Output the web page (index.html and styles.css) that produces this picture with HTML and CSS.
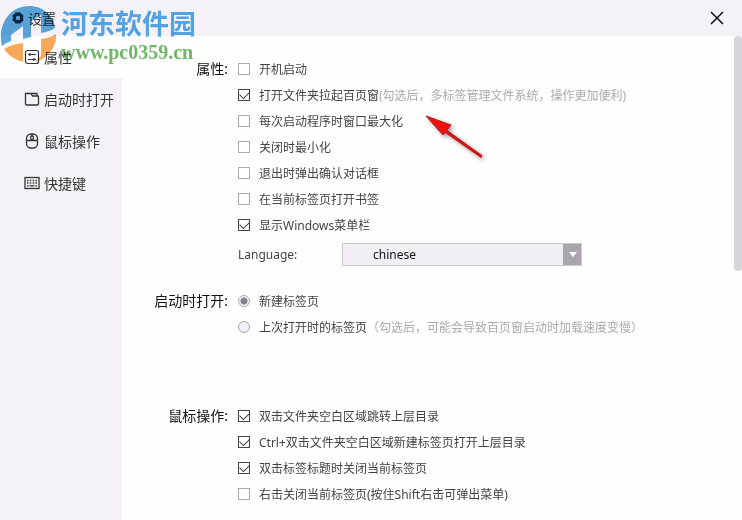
FILE: index.html
```
<!DOCTYPE html>
<html lang="zh-CN">

<head>
    <meta charset="UTF-8">
    <meta name="viewport" content="width=device-width, initial-scale=1.0">
    <title>设置</title>
    <link rel="stylesheet" href="styles.css">
</head>

<body>
    <header class="titlebar">
        <svg class="gear" viewBox="0 0 12 12">
            <path fill="#24384c" fill-rule="evenodd" d="M3.5 0.5h5L9.5 2l2 1.5-.5 2.5.5 2.5-2 1.5-1 1.5h-5L2.500 10 .5 8.500 1 6 .5 3.500 2.500 2zM6 3.800a2.200 2.200 0 1 0 0 4.400 2.200 2.200 0 0 0 0-4.400z"/>
        </svg>
        <h1>设置</h1>
        <button class="close" aria-label="关闭">
            <svg viewBox="0 0 14 14"><path d="M1 1l12 12M13 1L1 13" fill="none" stroke="#111" stroke-width="1.500"/></svg>
        </button>
    </header>

    <div class="layout">
        <nav class="sidebar">
            <a href="#general" class="active">
                <svg viewBox="0 0 16 16" fill="none" stroke="#333" stroke-width="1.200">
                    <rect x="1.500" y="1.500" width="13" height="13" rx="2"/>
                    <path d="M4 5.500h8M6 4v3M4 10.500h8M10 9v3"/>
                </svg>
                属性
            </a>
            <a href="#startup">
                <svg viewBox="0 0 16 16" fill="none" stroke="#333" stroke-width="1.300">
                    <path d="M2.500 14q-1 0-1-1V2.500h5.500l1.500 2.500H14q.5 0 .5.500V13q0 1-1 1zM7 2.500h6V5"/>
                </svg>
                启动时打开
            </a>
            <a href="#mouse">
                <svg viewBox="0 0 16 16" fill="none" stroke="#333" stroke-width="1.300">
                    <rect x="2.500" y="1" width="11" height="14" rx="4.500"/>
                    <path d="M2.500 7.500h11M8 1v2M8 6v1.500"/>
                    <rect x="6.600" y="3" width="2.800" height="3.400" rx="1"/>
                </svg>
                鼠标操作
            </a>
            <a href="#hotkey">
                <svg viewBox="0 0 16 16" fill="none" stroke="#333" stroke-width="1.300">
                    <rect x="1" y="2.500" width="14" height="11"/>
                    <path d="M3 5.500h10M3 8h10" stroke-dasharray="1.500 1.300"/>
                    <path d="M3 10.800h1.500M5.500 10.800h5M11.500 10.800H13"/>
                </svg>
                快捷键
            </a>
        </nav>

        <main class="content">
            <section class="group" id="general">
                <h2>属性:</h2>
                <div class="options">
                    <label><input type="checkbox"><span>开机启动</span></label>
                    <label><input type="checkbox" checked><span>打开文件夹拉起百页窗<em>(勾选后，多标签管理文件系统，操作更加便利)</em></span></label>
                    <label><input type="checkbox"><span>每次启动程序时窗口最大化</span></label>
                    <label><input type="checkbox"><span>关闭时最小化</span></label>
                    <label><input type="checkbox"><span>退出时弹出确认对话框</span></label>
                    <label><input type="checkbox"><span>在当前标签页打开书签</span></label>
                    <label><input type="checkbox" checked><span>显示Windows菜单栏</span></label>
                    <div class="language">
                        <label for="language">Language:</label>
                        <div class="select-box">
                            <select id="language">
                                <option selected>chinese</option>
                                <option>english</option>
                            </select>
                        </div>
                    </div>
                </div>
            </section>

            <section class="group startup" id="startup">
                <h2>启动时打开:</h2>
                <div class="options">
                    <label><input type="radio" name="startup" checked><span>新建标签页</span></label>
                    <label><input type="radio" name="startup"><span>上次打开时的标签页<em>（勾选后，可能会导致百页窗启动时加载速度变慢）</em></span></label>
                </div>
            </section>

            <section class="group" id="mouse">
                <h2>鼠标操作:</h2>
                <div class="options">
                    <label><input type="checkbox" checked><span>双击文件夹空白区域跳转上层目录</span></label>
                    <label><input type="checkbox" checked><span>Ctrl+双击文件夹空白区域新建标签页打开上层目录</span></label>
                    <label><input type="checkbox" checked><span>双击标签标题时关闭当前标签页</span></label>
                    <label><input type="checkbox"><span>右击关闭当前标签页(按住Shift右击可弹出菜单)</span></label>
                </div>
            </section>
            <div class="scroll-thumb"></div>
        </main>
    </div>

    <!-- 水印 -->
    <div class="watermark">
        <svg viewBox="0 0 56 56">
            <path fill="#3f9ad6" d="M2 40C-3 20 9 0 29 0C43 0 53 9 55 22C51 25 46 26 41 27V9L31 15V31L23 33V20L11 29V35Q5 37 2 40z"/>
            <path fill="#f79a3c" d="M56 28C57 41 48 52 35 56L41 50V33Q50 32 56 28zM4 43Q12 38 23 37V56Q11 53 4 43z"/>
        </svg>
        <div class="watermark-text">
            <strong>河东软件园</strong>
            <span>www.pc0359.cn</span>
        </div>
    </div>

    <!-- 红色箭头 -->
    <svg class="arrow" viewBox="0 0 64 52">
        <path fill="#c81a1a" d="M20 15l39 28q1 2-1 3L18 18z"/>
        <path fill="#f01010" stroke="#b01818" stroke-width="1" d="M3 4l25 9-8 10z"/>
    </svg>
</body>

</html>
```
FILE: styles.css
```
* {
    box-sizing: border-box;
}

body {
    font-family: "Noto Sans", "Noto Sans CJK SC", sans-serif;
    font-size: 12px;
    color: #444;
    background-color: #fefefe;
    margin: 0;
    display: flex;
    flex-direction: column;
    min-height: 100vh;
    position: relative;
}

.titlebar {
    display: flex;
    align-items: center;
    height: 36px;
    padding: 0 17px 0 12px;
    background-color: #f4f2f7;
}

.gear {
    width: 12px;
    height: 12px;
    margin-right: 4px;
}

h1 {
    flex: 1;
    margin: 0;
    font-size: 14px;
    font-weight: normal;
    color: #333;
}

.close {
    display: flex;
    padding: 1px;
    border: none;
    background: none;
    cursor: pointer;
}

.close svg {
    width: 14px;
    height: 14px;
}

.layout {
    display: flex;
    flex: 1;
}

.sidebar {
    width: 122px;
    background-color: #f4f2f7;
}

.sidebar a {
    display: flex;
    align-items: center;
    gap: 4px;
    height: 42px;
    padding-left: 24px;
    font-size: 14px;
    white-space: nowrap;
    color: #333;
    text-decoration: none;
}

.sidebar a.active {
    background-color: #fefefe;
}

.sidebar svg {
    width: 16px;
    height: 16px;
}

.content {
    flex: 1;
    position: relative;
    display: flex;
    flex-direction: column;
    gap: 16px;
    padding-top: 20px;
}

.group {
    display: flex;
    gap: 10px;
}

.group.startup {
    min-height: 99px;
}

h2 {
    width: 106px;
    margin: 0;
    font-size: 14px;
    font-weight: normal;
    line-height: 26px;
    text-align: right;
    color: #111;
}

.options > label {
    display: flex;
    align-items: center;
    gap: 9px;
    height: 26px;
    white-space: nowrap;
}

em {
    font-style: normal;
    color: #aaa;
}

input {
    appearance: none;
    width: 12px;
    height: 12px;
    margin: 0;
    border: 1px solid #aaa;
    background-color: #fff;
}

input[type="checkbox"]:checked {
    display: grid;
    place-items: center;
    border-color: #444;
}

input[type="checkbox"]:checked::before {
    content: "";
    width: 8px;
    height: 5px;
    margin-bottom: 3px;
    border: solid #444;
    border-width: 0 0 1px 1px;
    transform: rotate(-45deg);
}

input[type="radio"] {
    border-radius: 50%;
    background-color: #f0eff5;
}

input[type="radio"]:checked {
    background: radial-gradient(#85838b 3px, #f4f2f7 4px);
}

.language {
    display: flex;
    align-items: center;
    height: 34px;
    padding-bottom: 2px;
}

.language label {
    width: 104px;
}

.select-box {
    position: relative;
    width: 240px;
}

.select-box::after {
    content: "";
    position: absolute;
    top: 9px;
    right: 5px;
    border: 4px solid transparent;
    border-top: 5px solid #fff;
    pointer-events: none;
}

select {
    display: block;
    appearance: none;
    width: 100%;
    height: 23px;
    padding: 0 30px;
    border: 1px solid #ccc9d0;
    border-radius: 0;
    background: linear-gradient(#a9a7ab, #a9a7ab) right / 18px 100% no-repeat #f1eef4;
    font: inherit;
    color: #111;
}

.scroll-thumb {
    position: absolute;
    top: 0;
    right: 0;
    width: 8px;
    height: 235px;
    border-radius: 4px;
    background-color: #d7d5d9;
}

.watermark {
    position: absolute;
    top: 6px;
    left: 0;
    display: flex;
    gap: 5px;
    opacity: 0.85;
    mix-blend-mode: multiply;
    pointer-events: none;
}

.watermark svg {
    width: 56px;
    height: 56px;
}

.watermark-text {
    display: flex;
    flex-direction: column;
}

.watermark strong {
    font-size: 27px;
    line-height: 36px;
    color: #3c9ce8;
}

.watermark span {
    font: bold 20px/20px "Liberation Serif", serif;
    color: #55ac4c;
}

.arrow {
    position: absolute;
    top: 112px;
    left: 423px;
    width: 64px;
    height: 52px;
    filter: drop-shadow(2px 2px 2px rgba(0, 0, 0, 0.4));
    pointer-events: none;
}
```
